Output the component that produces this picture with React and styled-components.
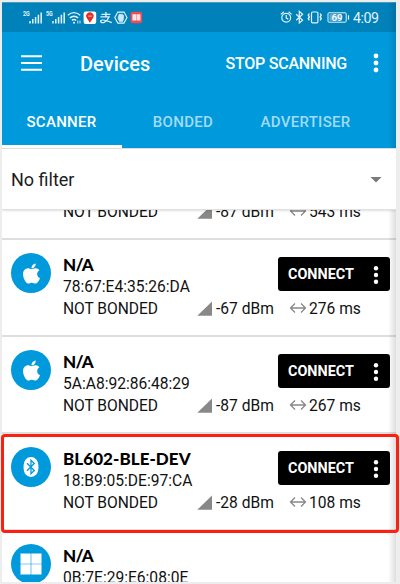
import React from "react";
import styled, { createGlobalStyle } from "styled-components";
import { FaApple } from "react-icons/fa";

const GlobalStyle = createGlobalStyle`
  * { box-sizing: border-box; }
  body { margin: 0; background: #ededed; font-family: Roboto, "Liberation Sans", sans-serif; }
  svg { display: block; flex: none; }
`;

const Page = styled.div`
  position: relative;
  width: 400px;
  height: 584px;
  padding: 2px 4px 2px 2px;
  background: #ededed;
  overflow: hidden;
`;

const Screen = styled.main`
  position: relative;
  display: flex;
  flex-direction: column;
  width: 394px;
  height: 580px;
  background: #fff;
  overflow: hidden;
`;

const EdgeShade = styled.div`
  position: absolute;
  top: 0;
  right: 0;
  width: 8px;
  height: 100%;
  background: linear-gradient(to right, rgba(0, 0, 0, 0), rgba(0, 0, 0, 0.13));
  pointer-events: none;
`;

const StatusBar = styled.header`
  display: flex;
  justify-content: space-between;
  flex: none;
  height: 30px;
  padding: 0 18px 0 20px;
  background: #0081b9;
  border-top: 1px solid #4a9cbd;
  color: #e4f3fa;
`;

const StatusGroup = styled.div`
  display: flex;
  align-items: center;
  height: 28px;
`;

const Clock = styled.span`
  font-size: 14.2px;
  line-height: 28px;
  padding-top: 1px;
  width: 25px;
  white-space: nowrap;
  letter-spacing: -0.5px;
  margin-left: 2px;
`;

const AppBar = styled.div`
  display: flex;
  align-items: center;
  flex: none;
  height: 64px;
  background: #0099dc;
  color: #fff;
  padding: 0 17px 2px 19px;
`;

const Title = styled.h1`
  margin: 1px 0 0 38px;
  font-size: 20px;
  font-weight: 500;
  letter-spacing: 0.05px;
`;

const ScanAction = styled.button`
  margin: 0 26px 0 auto;
  padding: 0;
  border: 0;
  background: none;
  color: inherit;
  font: 500 16px Roboto, sans-serif;
  letter-spacing: -0.25px;
`;

const Tabs = styled.nav`
  display: grid;
  grid-template-columns: 120px 123px 122px;
  flex: none;
  height: 52px;
  background: #0099dc;
`;

const Tab = styled.div`
  display: flex;
  align-items: center;
  justify-content: center;
  padding: 3px 1px 0 0;
  border-bottom: 3px solid ${(p) => (p.$active ? "#fff" : "transparent")};
  color: ${(p) => (p.$active ? "#fff" : "#a3dbf4")};
  font-size: 15px;
  font-weight: 500;
  letter-spacing: 0.3px;
`;

const Filter = styled.div`
  display: flex;
  align-items: center;
  justify-content: space-between;
  flex: none;
  height: 62px;
  padding: 1px 14px 0 9px;
  color: #1c1c1c;
  font-size: 18px;
  border-top: 1px solid #ddd;
  border-bottom: 1px solid #e0e0e0;
  box-shadow: 0 1px 2px rgba(0, 0, 0, 0.12);
  z-index: 1;
  background: #fff;
`;

const DeviceList = styled.section`
  flex: 1;
  min-height: 0;
  overflow: hidden;
`;

const DeviceRow = styled.article`
  display: flex;
  align-items: flex-start;
  height: 97px;
  margin-top: ${(p) => (p.$scrolled ? "-67px" : "0")};
  padding-left: 9px;
  border-bottom: 2px solid #dedede;
`;

const Avatar = styled.div`
  display: flex;
  align-items: center;
  justify-content: center;
  flex: none;
  width: 40px;
  height: 40px;
  margin-top: 13px;
  border-radius: 50%;
  background: #0099dc;
  color: #fff;
`;

const Details = styled.div`
  display: grid;
  grid-template-columns: 134px 92px 1fr;
  grid-template-rows: 21px 23px 22px;
  flex: 1;
  margin: 14px 0 0 12px;
  color: #111;
  font-size: 15.6px;
  line-height: 22px;
  white-space: nowrap;
`;

const Identity = styled.div`
  grid-row: 1 / 3;
`;

const Name = styled.h2`
  margin: 0;
  height: 22px;
  font: 900 17px/21px Lato, sans-serif;
  letter-spacing: ${(p) => (p.$long ? "0.05px" : "-0.7px")};
  color: #000;
`;

const Address = styled.div`
  line-height: 22px;
`;

const State = styled.span`
  grid-row: 3;
  letter-spacing: -0.05px;
`;

const Metric = styled.span`
  grid-row: 3;
  display: flex;
  align-items: center;
  gap: ${(p) => p.$gap}px;
`;

const Connect = styled.button`
  grid-column: 2 / 4;
  grid-row: 1 / 3;
  justify-self: end;
  display: flex;
  align-items: center;
  justify-content: space-between;
  width: 112px;
  height: 34px;
  margin: 3px 6px 0 0;
  padding: 1px 11px 0 10px;
  border: 0;
  border-radius: 3px;
  background: #000;
  color: #fff;
  font: 700 14.4px Roboto, sans-serif;
`;

const Highlight = styled.div`
  position: absolute;
  left: 1px;
  top: 434px;
  width: 398px;
  height: 99px;
  border: 3px solid #fc2010;
  border-radius: 4px;
`;

const Dots = ({ r = 2.4, gap = 7 }) => (
  <svg width="6" height="20" viewBox="0 0 6 20" fill="#fff">
    {[10 - gap, 10, 10 + gap].map((y) => <circle key={y} cx="3" cy={y} r={r} />)}
  </svg>
);

const Cellular = ({ label }) => (
  <svg width="22.7" height="16" viewBox="0 0 22.7 16">
    <text x="1" y="6.6" fontSize="7" fontWeight="700" fontFamily="Roboto, sans-serif" textLength="6.8" lengthAdjust="spacingAndGlyphs" fill="#e4f3fa">{label}</text>
    <path d="M8 12v2.5M10.8 10v4.5M13.6 8v6.5M16.4 5.8v8.7M19.2 3.5v11" stroke="#e4f3fa" strokeWidth="1.5" fill="none" />
  </svg>
);

const StatusLeft = () => (
  <StatusGroup>
    <Cellular label="2G" />
    <Cellular label="5G" />
    <svg width="92" height="16" viewBox="0 0 92 16" fill="none" stroke="#e4f3fa" strokeWidth="1.4">
      <path d="M.8 6.2Q7 1 13.2 6.2M2.8 8.9Q7 5.5 11.2 8.9M4.9 11.4Q7 9.7 9.1 11.4" />
      <circle cx="7" cy="13.7" r="1" fill="#e4f3fa" stroke="none" />
      <path d="M10.8 11.5v3M13 14.5v-3" strokeWidth=".9" />
      <g transform="translate(-.6 .3)">
        <rect x="17.2" y="2.2" width="12.6" height="12.6" rx="2" fill="#fff" stroke="none" />
        <path d="M23.5 13.5l-3-4.6a3.7 3.7 0 1 1 6 0z" fill="#e52b25" stroke="none" />
        <path d="M22 6.8h3.3" stroke="#fff" strokeWidth=".8" />
        <path d="M35 5h9M39.5 2.8v5M34 7.6h8.6Q41 11.4 38 13 34.4 14.2 34.2 11.8 35.5 9 45.3 13.4" strokeWidth="1.3" />
        <path d="M51.4 2.8h6.2l3 5.5-3 5.5h-6.2l-3-5.5z" strokeWidth="1.1" />
        <path d="M51.8 7.6v1.7l1.4 3h3l1-3V6h-1V5h-3.5z" fill="#c9e8f6" strokeWidth=".6" />
        <rect x="64.2" y="2.4" width="11.5" height="11.6" rx="2" fill="#ef4c53" stroke="none" />
        <path d="M66 5h3.8v6.2H66zM70.2 5H74v6.2h-3.8z" fill="#f9e4e8" stroke="none" />
      </g>
    </svg>
  </StatusGroup>
);

const StatusRight = () => (
  <StatusGroup>
    <svg width="71" height="16" viewBox="0 0 71 16" fill="none" stroke="#e4f3fa" strokeWidth="1.2">
      <circle cx="6.2" cy="8.7" r="4.4" />
      <path d="M.8 5.4l3-2.7M11.6 5.4l-3-2.7M6.2 6v3l2 1.1" />
      <path d="M16.2 5.2l6.4 6-3.3 2.8V2.4l3.3 2.8-6.4 6" />
      <rect x="31.5" y="3" width="6.4" height="10.8" rx="1" />
      <path d="M29.3 4.5l-1 1.7 1 1.7-1 1.7 1 1.7M40.2 4.5l1 1.7-1 1.7 1 1.7-1 1.7" strokeWidth="1.4" />
      <rect x="48" y="3.8" width="18.2" height="9.4" rx="1" strokeWidth="1" />
      <rect x="49.5" y="5.2" width="12" height="6.6" fill="#65abcf" stroke="none" />
      <path d="M68.5 6.3v4.4" />
      <text x="51.5" y="11.9" fontSize="9.8" fontWeight="500" fontFamily="Roboto, sans-serif" fill="#fff" stroke="none">69</text>
    </svg>
    <Clock>4:09</Clock>
  </StatusGroup>
);

const SignalIcon = () => (
  <svg width="16" height="16" viewBox="0 0 16 16"><path d="M15 .5v14.3H.3z" fill="#888" /></svg>
);

const IntervalIcon = () => (
  <svg width="18" height="14" viewBox="0 0 18 14" fill="none" stroke="#888" strokeWidth="1.3">
    <path d="M2 6h14M6 1.5L1.5 6 6 10.5M12 1.5L16.5 6 12 10.5" />
  </svg>
);

const DeviceIcon = ({ kind }) => {
  if (kind === "apple") return <FaApple size={23} />;
  if (kind === "windows")
    return <svg width="22" height="22" viewBox="0 0 22 22"><path fill="#fff" d="M.5.5h10.2v10.2H.5zM11.3.5h10.2v10.2H11.3zM.5 11.3h10.2v10.2H.5zM11.3 11.3h10.2v10.2H11.3z" /></svg>;
  return (
    <svg width="16" height="20" viewBox="0 0 16 20">
      <rect x=".6" width="14.8" height="20" rx="7.2" ry="8.5" fill="#fff" />
      <path d="M4 6.3l7.3 7.2L8 16.8V3.2l3.3 3.3L4 13.7" fill="none" stroke="#0099dc" strokeWidth="1.3" />
    </svg>
  );
};

const devices = [
  { kind: "apple", power: "-87", interval: "543" },
  { kind: "apple", name: "N/A", address: "78:67:E4:35:26:DA", power: "-67", interval: "276" },
  { kind: "apple", name: "N/A", address: "5A:A8:92:86:48:29", power: "-87", interval: "267" },
  { kind: "bluetooth", name: "BL602-BLE-DEV", address: "18:B9:05:DE:97:CA", power: "-28", interval: "108" },
  { kind: "windows", name: "N/A", address: "0B:7E:29:E6:08:0E" },
];

const Device = ({ device, scrolled }) => (
  <DeviceRow $scrolled={scrolled}>
    <Avatar><DeviceIcon kind={device.kind} /></Avatar>
    <Details>
      <Identity>
        <Name $long={device.name?.length > 3}>{device.name}</Name>
        <Address>{device.address}</Address>
      </Identity>
      {device.power && (
        <>
          {device.name && <Connect>CONNECT<Dots r={2.2} gap={6.7} /></Connect>}
          <State>NOT BONDED</State>
          <Metric $gap={3}><SignalIcon />{device.power} dBm</Metric>
          <Metric $gap={2}><IntervalIcon />{device.interval} ms</Metric>
        </>
      )}
    </Details>
  </DeviceRow>
);

export default function App() {
  return (
    <>
      <GlobalStyle />
      <Page>
        <Screen>
          <StatusBar><StatusLeft /><StatusRight /></StatusBar>
          <AppBar>
            <svg width="21" height="16" viewBox="0 0 21 16"><path d="M0 1.3h21M0 8h21M0 14.7h21" stroke="#fff" strokeWidth="2" /></svg>
            <Title>Devices</Title>
            <ScanAction>STOP SCANNING</ScanAction>
            <Dots />
          </AppBar>
          <Tabs>
            <Tab $active>SCANNER</Tab>
            <Tab>BONDED</Tab>
            <Tab>ADVERTISER</Tab>
          </Tabs>
          <Filter>
            No filter
            <svg width="12" height="6" viewBox="0 0 12 6"><path d="M.5 0h11L6 5.5z" fill="#7b7b7b" /></svg>
          </Filter>
          <DeviceList>
            {devices.map((device, i) => <Device key={i} device={device} scrolled={i === 0} />)}
          </DeviceList>
          <EdgeShade />
        </Screen>
        <Highlight />
      </Page>
    </>
  );
}
